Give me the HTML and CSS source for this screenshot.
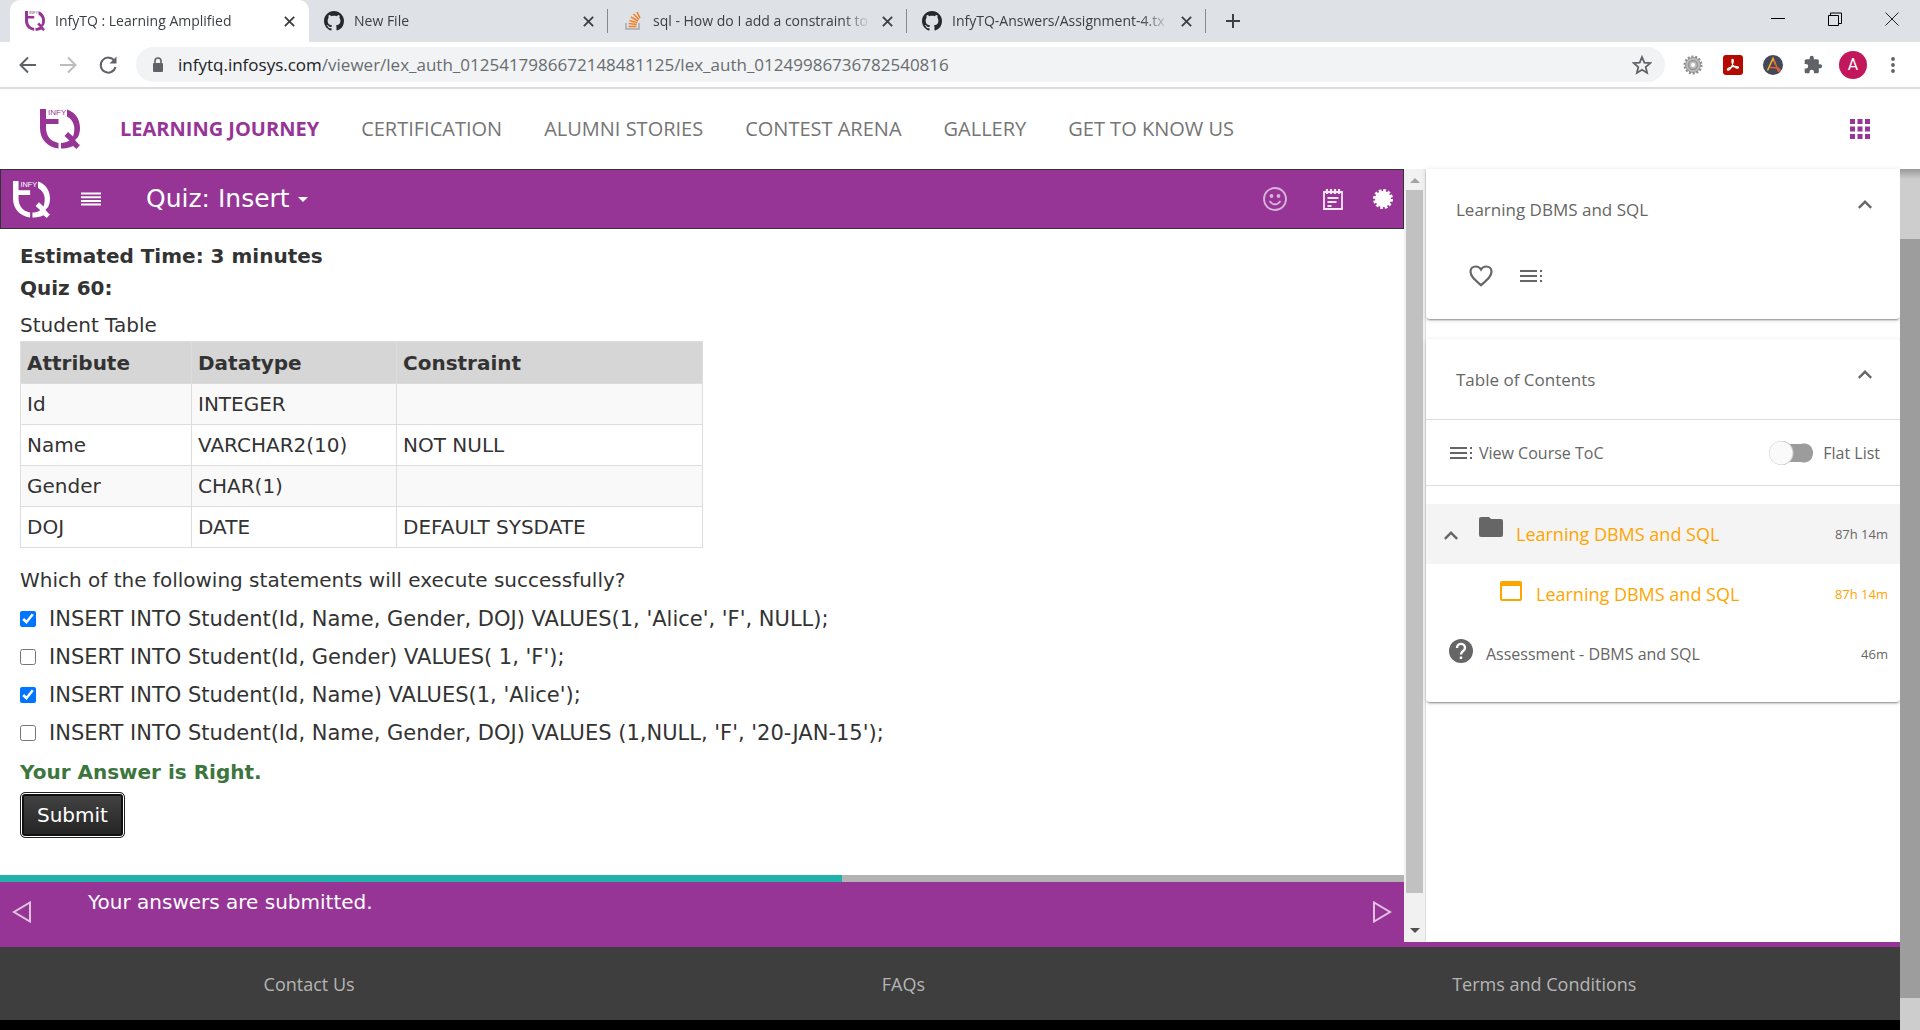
FILE: index.html
```html
<!DOCTYPE html>
<html lang="en">
<head>
<meta charset="utf-8">
<title>InfyTQ : Learning Amplified</title>
<link rel="stylesheet" href="styles.css">
</head>
<body>
<svg class="defs" aria-hidden="true">
  <symbol id="logo" viewBox="0 0 40 40">
    <path fill="currentColor" d="M0 0H6V10H18.500V15H6V18C6 27 10 32 18.500 34V39.500C7 38 0 30 0 19Z"/>
    <path fill="currentColor" d="M27 .5C35 3 40 10 40 19C40 22 39.500 25 38 28L35 31L38.500 35L40 36L36.500 40L33 37C29 39 25 39.500 21 39.500V34C24 34 27 33 29.500 31.500L24.500 27L28 23L33 27.500C36 19 34 11 27 7.500Z"/>
    <text x="8" y="6" font-size="8" font-family="Liberation Sans Narrow, sans-serif" fill="currentColor">INFY</text>
  </symbol>
  <symbol id="github" viewBox="0 0 16 16"><path fill="#24292e" d="M8 0C3.580 0 0 3.580 0 8c0 3.540 2.290 6.530 5.470 7.590.4.070.550-.170.550-.380 0-.190-.010-.820-.010-1.490-2.010.370-2.530-.490-2.690-.940-.090-.230-.480-.940-.820-1.130-.280-.150-.680-.520-.010-.530.630-.010 1.080.580 1.230.820.720 1.210 1.870.870 2.330.660.070-.520.280-.870.510-1.070-1.780-.200-3.640-.890-3.640-3.950 0-.870.310-1.590.820-2.150-.080-.200-.360-1.020.080-2.120 0 0 .670-.210 2.200.820.640-.180 1.320-.270 2-.270s1.360.090 2 .270c1.530-1.040 2.200-.820 2.200-.820.440 1.100.160 1.920.080 2.120.510.560.820 1.270.820 2.150 0 3.070-1.870 3.750-3.650 3.950.290.250.540.730.540 1.480 0 1.070-.010 1.930-.010 2.200 0 .210.150.460.550.380A8.010 8.010 0 0 0 16 8c0-4.420-3.580-8-8-8z"/></symbol>
  <symbol id="x" viewBox="0 0 14 14"><path d="M2 2L12 12M12 2L2 12" stroke="#3c4043" stroke-width="2" fill="none"/></symbol>
  <symbol id="toc" viewBox="0 0 24 24"><path fill="currentColor" d="M1 6h17v2H1zM1 11h17v2H1zM1 16h17v2H1zM21 6h2v2h-2zM21 11h2v2h-2zM21 16h2v2h-2z"/></symbol>
  <symbol id="up" viewBox="0 0 24 24"><path fill="currentColor" d="M12 8l-7 7 1.700 1.700L12 11.400l5.300 5.300L19 15z"/></symbol>
</svg>

<div class="tabs">
  <div class="tab tab-on"><svg class="fav purple"><use href="#logo"/></svg><span class="tab-title">InfyTQ : Learning Amplified</span><button class="x" aria-label="Close tab"><svg><use href="#x"/></svg></button></div>
  <div class="tab"><svg class="fav"><use href="#github"/></svg><span class="tab-title">New File</span><button class="x" aria-label="Close tab"><svg><use href="#x"/></svg></button></div>
  <div class="tab"><svg class="fav" viewBox="0 0 20 20"><path d="M3 12v6h13v-6" fill="none" stroke="#a5a9ad" stroke-width="1.500"/><path d="M5.500 15.500h8M5.700 12.500l8 1M6.500 9.500l7.600 2.300M8 6l7 4M10.500 3l5.500 5.500M14 1l3 6" stroke="#f48024" stroke-width="1.600"/></svg><span class="tab-title">sql - How do I add a constraint to</span><button class="x" aria-label="Close tab"><svg><use href="#x"/></svg></button></div>
  <div class="tab"><svg class="fav"><use href="#github"/></svg><span class="tab-title">InfyTQ-Answers/Assignment-4.tx</span><button class="x" aria-label="Close tab"><svg><use href="#x"/></svg></button></div>
  <button class="newtab" aria-label="New tab"><svg viewBox="0 0 16 16"><path d="M8 1v14M1 8h14" stroke="#3c4043" stroke-width="2"/></svg></button>
  <div class="win">
    <button aria-label="Minimize"><svg viewBox="0 0 14 14"><path d="M0 6.500h14" stroke="#000"/></svg></button>
    <button aria-label="Restore"><svg viewBox="0 0 14 14"><path d="M.5 3.500h10v10h-10zM2.500 3.500v-2.500h11v10.500h-3" fill="none" stroke="#000"/></svg></button>
    <button aria-label="Close window"><svg viewBox="0 0 14 14"><path d="M.5 .5l13 13M13.500 .5l-13 13" stroke="#222"/></svg></button>
  </div>
</div>

<div class="toolbar">
  <button aria-label="Back"><svg viewBox="0 0 20 20"><path d="M18 10H3M10 2.500L2.500 10l7.500 7.500" fill="none" stroke="#5f6368" stroke-width="2"/></svg></button>
  <button aria-label="Forward"><svg viewBox="0 0 20 20"><path d="M2 10h15M10 2.500l7.500 7.500-7.500 7.500" fill="none" stroke="#babcbe" stroke-width="2"/></svg></button>
  <button aria-label="Reload"><svg viewBox="0 0 20 20"><path d="M16.500 6A7.500 7.500 0 1 0 17.500 12" fill="none" stroke="#5f6368" stroke-width="2"/><path d="M18.500 1.500v7h-7z" fill="#5f6368"/></svg></button>
  <div class="omnibox">
    <svg class="lock" viewBox="0 0 12 16"><rect x="1" y="6" width="10" height="9" rx="1" fill="#5f6368"/><path d="M3 7V4a3 3 0 0 1 6 0v3" fill="none" stroke="#5f6368" stroke-width="1.600"/></svg>
    <span class="url"><b>infytq.infosys.com</b>/viewer/lex_auth_0125417986672148481125/lex_auth_01249986736782540816</span>
    <button aria-label="Bookmark"><svg viewBox="0 0 20 20"><path d="M10 2l2.300 5.600 6 .5-4.600 3.900 1.400 5.900L10 14.800 4.900 17.900l1.400-5.900L1.700 8.100l6-.5z" fill="none" stroke="#5f6368" stroke-width="1.800"/></svg></button>
  </div>
  <div class="exts">
    <button aria-label="Settings extension"><svg viewBox="0 0 20 20"><circle cx="10" cy="10" r="8" fill="none" stroke="#8f8f8f" stroke-width="3" stroke-dasharray="2 1.590"/><circle cx="10" cy="10" r="7.500" fill="#bdbdbd" stroke="#8a8a8a" stroke-width=".8"/><circle cx="10" cy="10" r="4.500" fill="none" stroke="#949494" stroke-width="1.500"/><circle cx="10" cy="10" r="2" fill="#fff"/></svg></button>
    <button aria-label="PDF extension"><svg viewBox="0 0 20 20"><rect width="20" height="20" rx="3" fill="#b30b00"/><path d="M9.500 4.500c1.500 0 .500 4-.5 6.200-1 2.400-3 5-4.300 4.300s1.800-2.700 5-3.300c2.500-.5 6-.300 5.700 1s-3.700 0-5.200-2.200C9 8.700 8.500 4.500 9.500 4.500z" fill="none" stroke="#fff" stroke-width="1.300"/></svg></button>
    <button aria-label="Annotate extension"><svg viewBox="0 0 20 20"><circle cx="10" cy="10" r="10" fill="#44465a"/><path d="M4.500 15.500L10 3.500l2.500 6" fill="none" stroke="#f4b32c" stroke-width="1.600"/><path d="M11 5l4 10.500q1 1.500 2-.5-1-3-10-2.500" fill="none" stroke="#e0662b" stroke-width="1.500"/></svg></button>
    <button aria-label="Extensions"><svg viewBox="0 0 24 24"><path fill="#5f6368" d="M20.500 11H19V7c0-1.100-.9-2-2-2h-4V3.500a2.500 2.500 0 0 0-5 0V5H4c-1.100 0-2 .9-2 2v3.800h1.500a2.700 2.700 0 0 1 0 5.400H2V20c0 1.100.9 2 2 2h3.800v-1.500a2.700 2.700 0 0 1 5.400 0V22H17c1.100 0 2-.9 2-2v-4h1.500a2.500 2.500 0 0 0 0-5z"/></svg></button>
    <button class="avatar">A</button>
    <button aria-label="Menu"><svg viewBox="0 0 20 20"><circle cx="10" cy="4" r="1.900" fill="#5f6368"/><circle cx="10" cy="10" r="1.900" fill="#5f6368"/><circle cx="10" cy="16" r="1.900" fill="#5f6368"/></svg></button>
  </div>
</div>

<header class="site">
  <svg class="logo purple"><use href="#logo"/></svg>
  <nav class="nav">
    <a class="on" href="#">LEARNING JOURNEY</a><a href="#">CERTIFICATION</a><a href="#">ALUMNI STORIES</a><a href="#">CONTEST ARENA</a><a href="#">GALLERY</a><a href="#">GET TO KNOW US</a>
  </nav>
  <button class="apps" aria-label="Apps"><svg viewBox="0 0 20 20"><path fill="#963596" d="M0 0h5v5H0zM7.500 0h5v5h-5zM15 0h5v5h-5zM0 7.500h5v5H0zM7.500 7.500h5v5h-5zM15 7.500h5v5h-5zM0 15h5v5H0zM7.500 15h5v5h-5zM15 15h5v5h-5z"/></svg></button>
</header>

<div class="page">
  <div class="body">
    <div class="cols">
      <main class="viewer">
        <div class="bar">
          <svg class="bar-logo"><use href="#logo"/></svg>
          <button class="burger" aria-label="Menu"><svg viewBox="0 0 20 14"><path d="M0 1.500h20M0 5.200h20M0 8.900h20M0 12.600h20" stroke="#fff" stroke-width="2"/></svg></button>
          <button class="title">Quiz: Insert<i class="caret"></i></button>
          <div class="bar-tools">
            <button class="smile" aria-label="Feedback"><svg viewBox="0 0 24 24" fill="none" stroke="#d9b3d9" stroke-width="1.800"><circle cx="12" cy="12" r="11"/><path d="M6.500 14q5.500 7 11 0"/><circle cx="8.500" cy="9" r="1" fill="#e0c2e0"/><circle cx="15.500" cy="9" r="1" fill="#e0c2e0"/></svg></button>
            <button aria-label="Notes"><svg viewBox="0 0 24 24" fill="none" stroke="#f3e6f3" stroke-width="1.800"><path d="M3 5h18v17H3zM6.500 11h11M6.500 15h9M6.500 19h4"/><path d="M6 2v5M10 2v5M14 2v5M18 2v5" stroke-width="2.200"/></svg></button>
            <button aria-label="Settings"><svg viewBox="0 0 24 24"><circle cx="12" cy="12" r="8" fill="#fff"/><circle cx="12" cy="12" r="8.500" fill="none" stroke="#fff" stroke-width="3" stroke-dasharray="2.650 1.800"/></svg></button>
          </div>
        </div>
        <form class="quiz" onsubmit="return false">
          <h2>Estimated Time: 3 minutes</h2>
          <h2>Quiz 60:</h2>
          <table>
            <caption>Student Table</caption>
            <colgroup><col class="c1"><col class="c2"><col class="c3"></colgroup>
            <thead><tr><th>Attribute</th><th>Datatype</th><th>Constraint</th></tr></thead>
            <tbody>
              <tr><td>Id</td><td>INTEGER</td><td></td></tr>
              <tr><td>Name</td><td>VARCHAR2(10)</td><td>NOT NULL</td></tr>
              <tr><td>Gender</td><td>CHAR(1)</td><td></td></tr>
              <tr><td>DOJ</td><td>DATE</td><td>DEFAULT SYSDATE</td></tr>
            </tbody>
          </table>
          <p class="question">Which of the following statements will execute successfully?</p>
          <label class="opt"><input type="checkbox" checked>INSERT INTO Student(Id, Name, Gender, DOJ) VALUES(1, 'Alice', 'F', NULL);</label>
          <label class="opt"><input type="checkbox">INSERT INTO Student(Id, Gender) VALUES( 1, 'F');</label>
          <label class="opt"><input type="checkbox" checked>INSERT INTO Student(Id, Name) VALUES(1, 'Alice');</label>
          <label class="opt"><input type="checkbox">INSERT INTO Student(Id, Name, Gender, DOJ) VALUES (1,NULL, 'F', '20-JAN-15');</label>
          <p class="right">Your Answer is Right.</p>
          <button class="submit">Submit</button>
        </form>
        <div class="progress"><div class="done"></div></div>
        <div class="status">
          <button aria-label="Previous"><svg viewBox="0 0 20 22"><path d="M18 1.500v19L2 11z" fill="none" stroke="#e0c2e0" stroke-width="2"/></svg></button>
          <p>Your answers are submitted.</p>
          <button aria-label="Next"><svg viewBox="0 0 20 22"><path d="M2 1.500v19L18 11z" fill="none" stroke="#e0c2e0" stroke-width="2"/></svg></button>
        </div>
      </main>
      <div class="side-wrap">
        <div class="inner-scroll"><i class="arr-up"></i><div class="thumb"></div><i class="arr-down"></i></div>
        <aside class="side">
          <section class="card first">
            <div class="card-head"><h3>Learning DBMS and SQL</h3><button aria-label="Collapse"><svg><use href="#up"/></svg></button></div>
            <div class="acts">
              <button aria-label="Like"><svg viewBox="0 0 24 24" fill="none" stroke="#666" stroke-width="2.200"><path d="M12 21.300C5 15 1.500 12 1.500 7.700 1.500 4.500 4 2.500 6.800 2.500c2.200 0 4 1 5.200 3 1.200-2 3-3 5.200-3 2.800 0 5.300 2 5.300 5.200 0 4.300-3.500 7.300-10.500 13.600z"/></svg></button>
              <button aria-label="Contents"><svg><use href="#toc"/></svg></button>
            </div>
          </section>
          <section class="card">
            <div class="card-head line"><h3>Table of Contents</h3><button aria-label="Collapse"><svg><use href="#up"/></svg></button></div>
            <div class="view line">
              <a href="#"><svg><use href="#toc"/></svg>View Course ToC</a>
              <label><input type="checkbox" class="switch">Flat List</label>
            </div>
            <ul class="tree">
              <li class="root"><button aria-label="Collapse folder"><svg><use href="#up"/></svg></button><svg class="ic" viewBox="0 0 24 24"><path fill="#666" d="M2 2h8l2 2h10q2 0 2 2v14q0 2-2 2H2q-2 0-2-2V4q0-2 2-2z"/></svg><a href="#">Learning DBMS and SQL</a><span>87h 14m</span></li>
              <li class="child"><svg class="ic" viewBox="0 0 24 24"><path fill="#ffa500" d="M3 2h18q2 0 2 2v16q0 2-2 2H3q-2 0-2-2V4q0-2 2-2zM3 7v13h18V7z"/></svg><a href="#">Learning DBMS and SQL</a><span>87h 14m</span></li>
              <li class="assess"><svg class="ic" viewBox="0 0 24 24"><circle cx="12" cy="12" r="12" fill="#666"/><path d="M8 9c0-5.500 8-5.500 8 0 0 3-4 3-4 6.500" fill="none" stroke="#fff" stroke-width="2.400"/><path fill="#fff" d="M10.800 17.500h2.400v2.500h-2.400z"/></svg><a href="#">Assessment - DBMS and SQL</a><span>46m</span></li>
            </ul>
          </section>
        </aside>
      </div>
    </div>
    <footer class="foot"><a href="#">Contact Us</a><a href="#">FAQs</a><a href="#">Terms and Conditions</a></footer>
  </div>
  <div class="page-scroll"><div class="page-thumb"></div></div>
</div>
</body>
</html>
```
FILE: styles.css
```css
* { box-sizing: border-box; }
body { margin: 0; min-height: 100vh; display: flex; flex-direction: column; background: #fff; color: #666; font: 17px/24px "Open Sans", "Noto Sans", sans-serif; }
h2, h3, p, ul { margin: 0; padding: 0; font-weight: 400; }
a { color: inherit; text-decoration: none; }
button { border: 0; padding: 0; background: none; font: inherit; color: inherit; display: flex; flex: none; align-items: center; justify-content: center; cursor: pointer; }
svg { display: block; flex: none; }
.defs { display: none; }
.purple { color: #963596; }

/* Browser window */
.tabs { height: 42px; padding-left: 10px; display: flex; align-items: stretch; background: #dee1e6; color: #3c4043; font-size: 14px; line-height: 20px; }
.tab { flex: 0 1 299px; min-width: 0; padding: 0 13px 0 15px; display: flex; align-items: center; gap: 10px; }
.tab-on { background: #fff; border-radius: 10px 10px 0 0; }
.tab:nth-child(n+2) { background: linear-gradient(#868a8f, #868a8f) right center / 1px 24px no-repeat; }
.fav { width: 20px; height: 20px; }
.tab-title { flex: 1; min-width: 0; overflow: hidden; white-space: nowrap; -webkit-mask-image: linear-gradient(to right, #000 calc(100% - 28px), transparent); mask-image: linear-gradient(to right, #000 calc(100% - 28px), transparent); }
.x svg { width: 13px; height: 13px; }
.newtab { width: 54px; }
.newtab svg { width: 16px; height: 16px; }
.win { margin-left: auto; display: flex; }
.win button { width: 57px; padding-bottom: 5px; }
.win svg { width: 14px; height: 14px; }
.toolbar { height: 47px; padding: 0 17px 0 18px; display: flex; align-items: center; gap: 20px; border-bottom: 2px solid #dadce0; }
.toolbar svg { width: 20px; height: 20px; }
.omnibox { flex: 1; height: 35px; margin: 0 -2px; padding: 0 13px 0 16px; display: flex; align-items: center; border-radius: 18px; background: #f1f3f4; }
.toolbar .lock { width: 12px; height: 16px; margin-right: 14px; }
.url { flex: 1; min-width: 0; overflow: hidden; white-space: nowrap; color: #686c70; font-weight: 400; }
.url b { font-weight: 400; color: #202124; }
.exts { display: flex; align-items: center; gap: 20px; }
.exts .avatar { width: 28px; height: 28px; margin: 0 -4px; border-radius: 50%; background: #c2185b; color: #fff; font: 16px/28px Roboto, sans-serif; }

/* Site header */
.site { height: 80px; padding: 0 50px 0 40px; display: flex; align-items: center; }
.logo { width: 40px; height: 40px; }
.nav { flex: 1; padding-left: 40px; display: flex; gap: 42px; font-size: 20px; line-height: 28px; color: #757575; white-space: nowrap; }
.nav .on { color: #963596; font-weight: 700; }
.apps svg { width: 20px; height: 20px; }

.page { flex: 1; display: flex; }
.body { flex: 1; min-width: 0; display: flex; flex-direction: column; border-bottom: 10px solid #000; }
.cols { flex: 1; display: flex; }
.page-scroll { width: 20px; padding: 70px 0 32px; display: flex; background: linear-gradient(#999, #cdcdcd) top / 100% 10px no-repeat #cdcdcd; }
.page-thumb { flex: 1; background: #9d9d9d; }

/* Quiz viewer */
.viewer { flex: 1; min-width: 0; display: flex; flex-direction: column; color: #333; font: 20px/32px "DejaVu Sans", sans-serif; }
.bar { height: 60px; padding: 0 8px 0 12px; display: flex; align-items: center; background: #963596; border: 1px solid #333; color: #fff; }
.bar-logo { width: 37px; height: 37px; margin-right: 31px; }
.burger { margin-right: 45px; }
.burger svg { width: 20px; height: 14px; }
.title { flex: none; gap: 8px; font-size: 25px; }
.caret { border: 5px solid transparent; border-top-color: #fff; border-bottom: 0; }
.bar-tools { margin-left: auto; display: flex; align-items: center; gap: 26px; }
.bar-tools svg { width: 24px; height: 24px; }
.smile { margin-right: 8px; }
.quiz { flex: 1; padding: 11px 20px 20px; }
h2 { font-size: 20px; line-height: 32px; font-weight: 700; }
table { width: 683px; margin-top: 5px; border-collapse: collapse; table-layout: fixed; }
caption { text-align: left; }
.c1 { width: 171px; }
.c2 { width: 205px; }
th, td { height: 41px; padding: 0 6px; border: 1px solid #ddd; text-align: left; }
th { height: 42px; background: #d6d6d6; }
tbody tr:nth-child(odd) { background: #f9f9f9; }
.question { margin-top: 16px; }
.opt { height: 38px; display: flex; align-items: center; font-size: 21px; white-space: pre; }
.question + .opt { margin-top: 4px; }
.opt input { width: 16px; height: 16px; margin: 0 13px 0 0; accent-color: #0075ff; }
.right { margin: 4px 0; color: #3c763d; font-weight: 700; }
.submit { height: 46px; padding: 0 16px; border: 1px solid #222; border-radius: 5px; background: linear-gradient(#444, #222); box-shadow: inset 0 0 0 1px #fff, inset 0 0 0 3px #111; color: #fff; }
.progress { height: 7px; background: #b3b3b3; }
.done { width: 60%; height: 100%; background: #20b2aa; }
.status { height: 65px; padding: 0 12px; display: flex; align-items: center; gap: 56px; background: #963596; color: #fff; }
.status p { flex: 1; align-self: flex-start; padding-top: 4px; }
.status svg { width: 20px; height: 22px; }
.status button { padding-bottom: 6px; }

/* Course sidebar */
.side-wrap { width: 496px; display: flex; border-bottom: 5px solid #963596; }
.inner-scroll { width: 21px; padding: 9px 2px 5px; display: flex; flex-direction: column; align-items: center; background: #f1f1f1; }
.arr-up { border: 5px solid transparent; border-bottom-color: #a3a3a3; border-top: 0; }
.arr-down { border: 5px solid transparent; border-top-color: #505050; border-bottom: 0; margin-bottom: 4px; }
.thumb { flex: 1; width: 17px; margin: 7px 0 35px; background: #c1c1c1; }
.side { flex: 1; min-width: 0; border-left: 1px solid #ddd; }
.card { margin-bottom: 20px; padding-bottom: 18px; border-radius: 4px; box-shadow: 0 2px 2px -1px #0006, 0 1px 5px #0002; }
.first { height: 150px; border-radius: 0 0 4px 4px; }
.card-head { height: 80px; padding: 0 23px 0 30px; display: flex; align-items: center; justify-content: space-between; }
.card-head h3 { padding-top: 2px; font-size: 17px; line-height: 24px; }
.card-head svg { width: 24px; height: 24px; margin-bottom: 10px; }
.line { border-bottom: 1px solid #ddd; height: 81px; }
.acts { padding: 15px 43px; display: flex; gap: 26px; }
.acts svg { width: 24px; height: 24px; }
.view { height: 66px; padding: 0 20px 0 23px; display: flex; align-items: center; justify-content: space-between; font-size: 16px; }
.view a, .view label { display: flex; align-items: center; gap: 6px; }
.view label { gap: 10px; }
.view svg { width: 24px; height: 24px; }
.switch { appearance: none; width: 44px; height: 24px; margin: 0; border-radius: 12px; background: radial-gradient(circle at 12px 12px, #fafafa 11px, #ccc 12px, transparent 13px), linear-gradient(#9c9c9c, #9c9c9c) 10px 3px / 24px 18px no-repeat, radial-gradient(circle at 35px 12px, #9c9c9c 9px, transparent 10px); }
.tree { padding-top: 18px; list-style: none; }
.tree li { height: 60px; padding-right: 12px; display: flex; align-items: center; }
.tree a { flex: 1; font-size: 16px; }
.tree span { font-size: 13px; }
.ic { width: 24px; height: 24px; margin: 0 13px 6px 0; }
.tree .root { padding-left: 13px; background: #f4f4f4; }
.root .ic { margin-bottom: 14px; }
.root button { margin-right: 16px; padding-top: 2px; }
.root button svg { width: 24px; height: 24px; }
.root a, .child { color: #ffa500; }
.tree .root a, .tree .child a { font-size: 18px; }
.tree .child { padding-left: 73px; }
.tree .assess { padding-left: 23px; }

.foot { height: 73px; display: flex; align-items: center; justify-content: space-around; background: #3e3e3e; color: #b5b5b5; font-size: 18px; }
```
